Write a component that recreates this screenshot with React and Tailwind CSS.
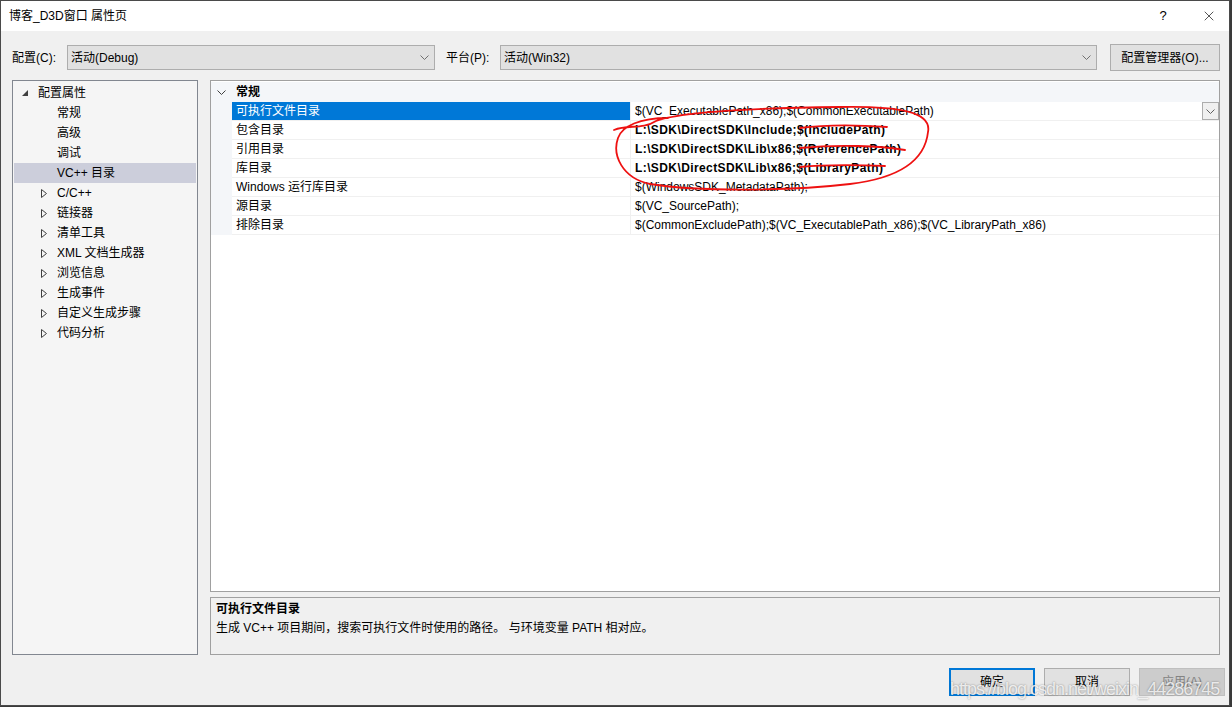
import React from 'react';
import { X } from 'lucide-react';

const treeItems = [
  { label: '配置属性', level: 0, icon: 'open' },
  { label: '常规', level: 1 },
  { label: '高级', level: 1 },
  { label: '调试', level: 1 },
  { label: 'VC++ 目录', level: 1, selected: true },
  { label: 'C/C++', level: 1, icon: 'closed' },
  { label: '链接器', level: 1, icon: 'closed' },
  { label: '清单工具', level: 1, icon: 'closed' },
  { label: 'XML 文档生成器', level: 1, icon: 'closed' },
  { label: '浏览信息', level: 1, icon: 'closed' },
  { label: '生成事件', level: 1, icon: 'closed' },
  { label: '自定义生成步骤', level: 1, icon: 'closed' },
  { label: '代码分析', level: 1, icon: 'closed' },
];

const props = [
  { name: '可执行文件目录', value: '$(VC_ExecutablePath_x86);$(CommonExecutablePath)', selected: true },
  { name: '包含目录', value: 'L:\\SDK\\DirectSDK\\Include;$(IncludePath)', bold: true },
  { name: '引用目录', value: 'L:\\SDK\\DirectSDK\\Lib\\x86;$(ReferencePath)', bold: true },
  { name: '库目录', value: 'L:\\SDK\\DirectSDK\\Lib\\x86;$(LibraryPath)', bold: true },
  { name: 'Windows 运行库目录', value: '$(WindowsSDK_MetadataPath);' },
  { name: '源目录', value: '$(VC_SourcePath);' },
  { name: '排除目录', value: '$(CommonExcludePath);$(VC_ExecutablePath_x86);$(VC_LibraryPath_x86)' },
];

function Chevron({ className = '' }) {
  return (
    <svg width="9" height="5" viewBox="0 0 9 5" className={className}>
      <path d="M0.5 0.5 L4.5 4.5 L8.5 0.5" fill="none" stroke="currentColor" strokeWidth="1" />
    </svg>
  );
}

function Combo({ text, width }) {
  return (
    <div className={`${width} h-[25px] bg-[#e1e1e1] border border-[#adadad] flex items-center pl-[3px] pr-[5px]`}>
      <span className="flex-1">{text}</span>
      <Chevron className="text-[#707070]" />
    </div>
  );
}

function TreeIcon({ icon }) {
  if (icon === 'open') {
    return (
      <svg width="6" height="6" viewBox="0 0 6 6">
        <polygon points="6,0 6,6 0,6" fill="#404040" />
      </svg>
    );
  }
  if (icon === 'closed') {
    return (
      <svg width="6" height="9" viewBox="0 0 6 9">
        <polygon points="0.5,0.5 5.5,4.5 0.5,8.5" fill="none" stroke="#404040" strokeWidth="1" />
      </svg>
    );
  }
  return null;
}

function Button({ children, variant }) {
  const styles = {
    primary: 'border-2 border-[#0078d7] bg-[#e1e1e1] text-black',
    normal: 'border border-[#adadad] bg-[#e1e1e1] text-black',
    disabled: 'border border-[#bfbfbf] bg-[#cccccc] text-[#838383]',
  };
  return (
    <div className={`w-[86px] h-[28px] flex items-center justify-center ${styles[variant]}`}>
      {children}
    </div>
  );
}

export default function App() {
  return (
    <div className="relative w-[1232px] h-[707px] bg-[#3a3a3a] overflow-hidden text-[12px] text-black font-['Liberation_Sans','Noto_Sans_CJK_SC',sans-serif]">
      <div className="w-[1230px] h-[706px] border border-[#4a4a4a] flex flex-col bg-[#f0f0f0]">
        {/* title bar */}
        <div className="h-[30px] bg-white flex items-center pl-[8px] shrink-0">
          <span className="text-[12px]">博客_D3D窗口 属性页</span>
          <div className="ml-auto flex h-full">
            <div className="w-[52px] flex items-center justify-center text-[13px]">?</div>
            <div className="w-[40px] flex items-center justify-center">
              <X size={16} strokeWidth={1} />
            </div>
          </div>
        </div>

        {/* config row */}
        <div className="pt-[13px] pl-[11px] pr-[9px] flex items-center h-[40px] shrink-0">
          <div className="h-[27px] flex items-center w-full">
            <span className="w-[55px]">配置(C):</span>
            <Combo text="活动(Debug)" width="w-[368px]" />
            <span className="ml-[11px] w-[54px]">平台(P):</span>
            <Combo text="活动(Win32)" width="w-[597px]" />
            <div className="ml-auto w-[110px] h-[27px] bg-[#e1e1e1] border border-[#adadad] flex items-center justify-center">
              配置管理器(O)...
            </div>
          </div>
        </div>

        {/* main */}
        <div className="mt-[9px] h-[575px] flex pl-[11px] pr-[9px] gap-[12px] shrink-0">
          {/* tree */}
          <div className="w-[186px] h-full border border-[#828790] bg-[#f5f5f5] pt-[2px]">
            {treeItems.map((it) => (
              <div
                key={it.label}
                className={`h-[20px] mx-[1px] flex items-center ${it.selected ? 'bg-[#cccedb]' : ''}`}
              >
                <div className={`${it.level === 0 ? 'ml-[8px]' : 'ml-[27px]'} w-[16px] flex items-center`}>
                  <TreeIcon icon={it.icon} />
                </div>
                <span>{it.label}</span>
              </div>
            ))}
          </div>

          {/* right */}
          <div className="flex-1 flex flex-col gap-[5px]">
            <div className="h-[512px] border border-[#a0a0a0] bg-white flex flex-col pt-[1px]">
              <div className="h-[20px] bg-[#f4f6f9] flex items-center pl-[6px]">
                <Chevron className="text-[#404040]" />
                <span className="ml-[10px] font-bold">常规</span>
              </div>
              {props.map((p) => (
                <div key={p.name} className="h-[19px] flex">
                  <div className="w-[21px] bg-[#f4f6f9]" />
                  <div
                    className={`w-[398px] pl-[4px] flex items-center border-b border-[#f0f0f0] ${
                      p.selected ? 'bg-[#0078d7] text-white border-[#0078d7]' : ''
                    }`}
                  >
                    {p.name}
                  </div>
                  <div className="w-[1px] bg-[#f0f0f0]" />
                  <div className="flex-1 pl-[4px] flex items-center border-b border-[#f0f0f0]">
                    <span className={`flex-1 whitespace-nowrap ${p.bold ? 'font-bold tracking-[0.4px]' : ''}`}>
                      {p.value}
                    </span>
                    {p.selected && (
                      <div className="w-[17px] h-[18px] border border-[#adadad] bg-[#f0f0f0] flex items-center justify-center">
                        <Chevron className="text-[#606060]" />
                      </div>
                    )}
                  </div>
                </div>
              ))}
            </div>
            <div className="flex-1 border border-[#a0a0a0] bg-[#f0f0f0] pl-[5px] pt-[1px]">
              <div className="h-[19px] flex items-center font-bold">可执行文件目录</div>
              <div className="h-[19px] flex items-center">
                生成 VC++ 项目期间，搜索可执行文件时使用的路径。 与环境变量 PATH 相对应。
              </div>
            </div>
          </div>
        </div>

        {/* buttons */}
        <div className="mt-[13px] flex justify-end gap-[9px] pr-[4px]">
          <Button variant="primary">确定</Button>
          <Button variant="normal">取消</Button>
          <Button variant="disabled">应用(A)</Button>
        </div>
      </div>

      {/* red annotation */}
      <svg className="absolute left-0 top-0 pointer-events-none" width="1232" height="707" viewBox="0 0 1232 707">
        <g fill="none" stroke="#ee1111" strokeWidth="1.8" strokeLinecap="round">
          <path d="M614 130 C628 124 642 130 656 121 C680 112 760 108 840 107 C900 106 932 112 928 132 C925 160 900 178 850 184 C790 191 700 192 650 184 C622 178 612 155 618 138 C622 126 640 118 668 118" />
          <path d="M800 128 C830 124 860 125 887 127" />
          <path d="M800 148 C840 144 880 146 905 150" />
          <path d="M800 167 C830 164 860 165 885 166" />
        </g>
      </svg>

      {/* watermark */}
      <div className="absolute left-[950px] top-[676px] text-[18px] tracking-[-1px] text-white/80 font-['Liberation_Sans',sans-serif] [text-shadow:0_0_2px_rgba(0,0,0,0.45)] pointer-events-none">
        https://blog.csdn.net/weixin_44286745
      </div>
    </div>
  );
}
